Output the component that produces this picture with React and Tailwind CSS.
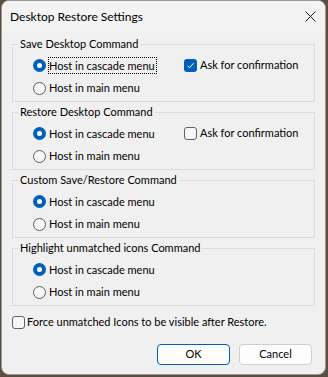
const font = { fontFamily: 'Lato, "Noto Sans", sans-serif' };

const Radio = ({ checked }) =>
  checked ? (
    <span className="flex h-[13px] w-[13px] shrink-0 items-center justify-center rounded-full bg-[#005fb8]">
      <span className="h-[5px] w-[5px] rounded-full bg-white" />
    </span>
  ) : (
    <span className="h-[13px] w-[13px] shrink-0 rounded-full border border-[#5f5f5f] bg-[#f6f6f6]" />
  );

const Check = ({ checked }) =>
  checked ? (
    <span className="flex h-[13px] w-[13px] shrink-0 items-center justify-center rounded-[3px] bg-[#005fb8]">
      <svg width="9" height="9" viewBox="0 0 9 9" fill="none">
        <path d="M1.5 4.8 L3.5 6.8 L7.6 2.2" stroke="white" strokeWidth="1" />
      </svg>
    </span>
  ) : (
    <span className="h-[13px] w-[13px] shrink-0 rounded-[3px] border border-[#5f5f5f] bg-[#f6f6f6]" />
  );

const Group = ({ title, ask, focus }) => (
  <fieldset className="border border-[#dcdcdc] pt-[2px] pb-[1px]">
    <legend className="ml-[5px] px-[2px] leading-4">{title}</legend>
    <div className="flex h-[23px] items-center whitespace-nowrap">
      <div className="flex w-[171px] items-center gap-[3px] pl-[20px]">
        <Radio checked />
        <span className={focus ? 'pr-px leading-[15px] outline outline-1 outline-dotted outline-black' : 'leading-[15px]'}>
          Host in cascade menu
        </span>
      </div>
      {ask !== undefined && (
        <div className="flex items-center gap-[3px]">
          <Check checked={ask} />
          <span>Ask for confirmation</span>
        </div>
      )}
    </div>
    <div className="flex h-[23px] items-center gap-[3px] pl-[20px]">
      <Radio />
      <span>Host in main menu</span>
    </div>
  </fieldset>
);

export default function App() {
  return (
    <div className="h-[377px] w-[328px] bg-[#5e4d3d] pl-[1px]" style={font}>
      <div className="flex h-[375px] w-[325px] flex-col overflow-hidden rounded-lg border border-[#9a9a9a] bg-[#f0f0f0] text-[11px] text-black">
        <div className="flex h-[31px] shrink-0 items-center justify-between bg-[#f3f3f3] pl-[8px] pr-[9px]">
          <span className="text-[12px]">Desktop Restore Settings</span>
          <svg width="11" height="11" viewBox="0 0 11 11" fill="none">
            <path d="M0.5 0.5 L10.5 10.5 M10.5 0.5 L0.5 10.5" stroke="#1a1a1a" strokeWidth="1" />
          </svg>
        </div>
        <div className="flex flex-col gap-[2px] pt-[4px] pl-[10px] pr-[10px]">
          <Group title="Save Desktop Command" ask={true} focus />
          <Group title="Restore Desktop Command" ask={false} />
          <Group title="Custom Save/Restore Command" />
          <Group title="Highlight unmatched icons Command" />
        </div>
        <div className="mt-[5px] flex h-[23px] items-center gap-[2px] whitespace-nowrap pl-[10px]">
          <Check />
          <span>Force unmatched Icons to be visible after Restore.</span>
        </div>
        <div className="mt-[10px] flex justify-end gap-[9px] pr-[13px]">
          <button className="h-[21px] w-[73px] rounded-[4px] border border-[#005fb8] bg-[#fdfdfd]">OK</button>
          <button className="h-[21px] w-[73px] rounded-[4px] border border-[#d0d0d0] bg-[#fdfdfd]">Cancel</button>
        </div>
      </div>
    </div>
  );
}
